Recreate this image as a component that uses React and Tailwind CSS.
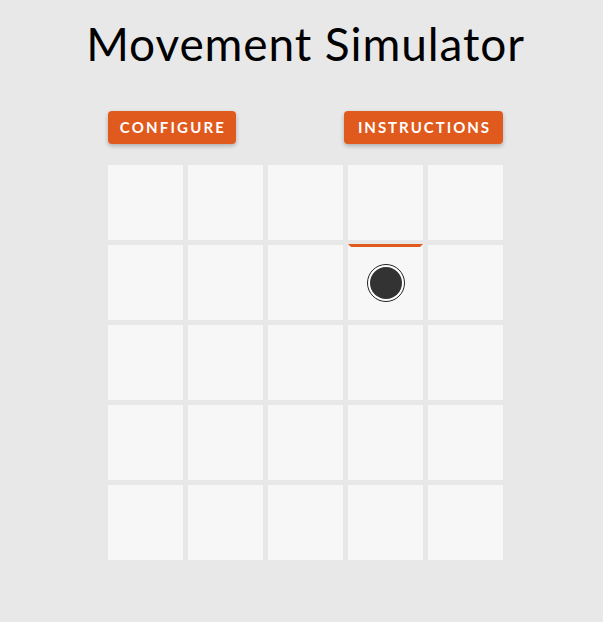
import React from "react";

const ROWS = 5;
const COLS = 5;
const robot = { row: 1, col: 3 }; // facing north

export default function App() {
  const cells = [];
  for (let r = 0; r < ROWS; r++) {
    for (let c = 0; c < COLS; c++) {
      const here = r === robot.row && c === robot.col;
      cells.push(
        <div key={r + "-" + c} className="relative w-[75px] h-[75px] bg-[#f7f7f7] flex items-center justify-center">
          {here && (
            <>
              <div className="absolute left-0 right-0 -top-[1px] h-0 border-t-[3px] border-t-[#e05a1e] border-x-[3px] border-x-transparent" />
              <div className="w-[38px] h-[38px] rounded-full border border-[#222] bg-white flex items-center justify-center">
                <div className="w-[32px] h-[32px] rounded-full bg-[#333]" />
              </div>
            </>
          )}
        </div>
      );
    }
  }

  return (
    <div className="min-h-screen bg-[#e8e8e8] flex justify-center pl-2 font-['Lato',sans-serif]">
      <div className="w-[395px] flex flex-col items-center">
        <h1 className="mt-[16px] text-[46px] leading-[56px] font-normal tracking-[0.9px] text-black whitespace-nowrap">
          Movement Simulator
        </h1>
        <div className="w-full flex justify-between mt-[39px]">
          <button className="h-[33px] w-[128px] rounded bg-[#e05a1e] text-white font-bold text-[15px] tracking-[2.2px] pl-[2px] shadow-[0_2px_4px_rgba(0,0,0,0.25)]">
            CONFIGURE
          </button>
          <button className="h-[33px] w-[159px] rounded bg-[#e05a1e] text-white font-bold text-[15px] tracking-[2px] pl-[2px] shadow-[0_2px_4px_rgba(0,0,0,0.25)]">
            INSTRUCTIONS
          </button>
        </div>
        <div className="mt-[21px] grid grid-cols-[repeat(5,75px)] gap-[5px]">
          {cells}
        </div>
      </div>
    </div>
  );
}
